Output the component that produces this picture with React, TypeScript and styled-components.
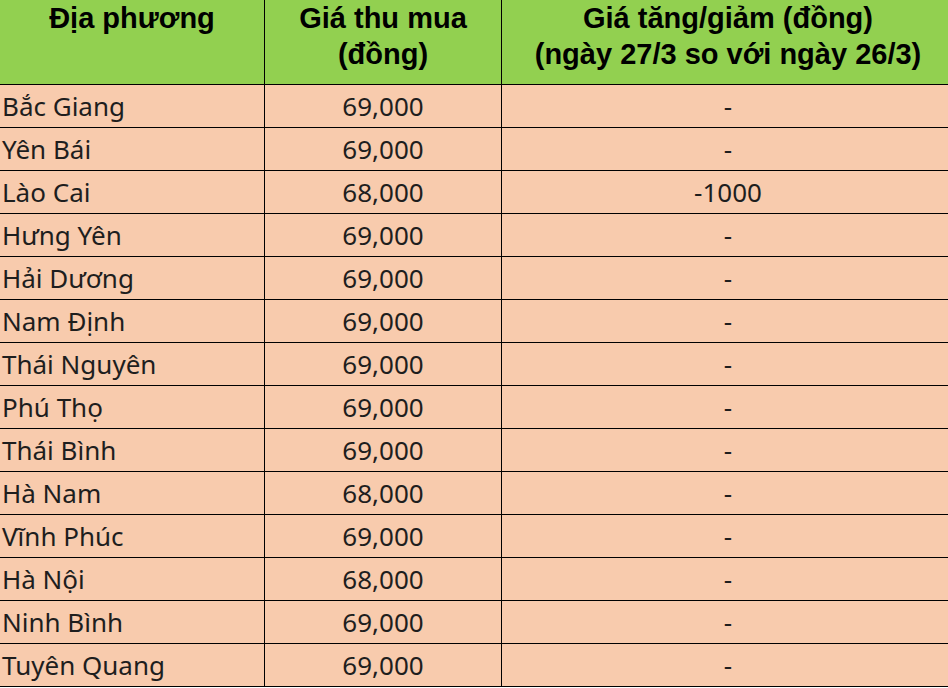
import React from 'react';
import styled, { createGlobalStyle } from 'styled-components';

const GlobalStyle = createGlobalStyle`
  html, body {
    margin: 0;
    padding: 0;
    background: #ffffff;
    overflow: hidden;
  }
`;

const Page = styled.div`
  width: 948px;
  height: 688px;
  overflow: hidden;
  background: #ffffff;
`;

const PriceTable = styled.table`
  border-collapse: collapse;
  table-layout: fixed;
  width: 952px;
  margin: -1px 0 0 -1px;
`;

const HeadCell = styled.th<{ width: number }>`
  width: ${p => p.width}px;
  height: 84px;
  padding: 0;
  background: #92d050;
  border: 1px solid #000;
  vertical-align: top;
  text-align: center;
  font-family: 'Liberation Sans', Arial, sans-serif;
  font-weight: 700;
  font-size: 29px;
  line-height: 36px;
  color: #000;
  white-space: nowrap;
`;

const Row = styled.tr`
  height: 43px;
`;

const Cell = styled.td<{ align?: 'left' | 'center' }>`
  padding: 0 ${p => (p.align === 'center' ? '0' : '2px')};
  background: #f8cbad;
  border: 1px solid #000;
  text-align: ${p => p.align || 'left'};
  vertical-align: middle;
  font-family: 'Noto Sans', 'Open Sans', sans-serif;
  font-size: 26px;
  color: #1e1e1e;
  white-space: nowrap;
`;

const rows: [string, string, string][] = [
  ['Bắc Giang', '69,000', '-'],
  ['Yên Bái', '69,000', '-'],
  ['Lào Cai', '68,000', '-1000'],
  ['Hưng Yên', '69,000', '-'],
  ['Hải Dương', '69,000', '-'],
  ['Nam Định', '69,000', '-'],
  ['Thái Nguyên', '69,000', '-'],
  ['Phú Thọ', '69,000', '-'],
  ['Thái Bình', '69,000', '-'],
  ['Hà Nam', '68,000', '-'],
  ['Vĩnh Phúc', '69,000', '-'],
  ['Hà Nội', '68,000', '-'],
  ['Ninh Bình', '69,000', '-'],
  ['Tuyên Quang', '69,000', '-'],
];

export default function App() {
  return (
    <Page>
      <GlobalStyle />
      <PriceTable>
        <thead>
          <tr>
            <HeadCell width={264}>Địa phương</HeadCell>
            <HeadCell width={236}>
              Giá thu mua
              <br />
              (đồng)
            </HeadCell>
            <HeadCell width={452}>
              Giá tăng/giảm (đồng)
              <br />
              (ngày 27/3 so với ngày 26/3)
            </HeadCell>
          </tr>
        </thead>
        <tbody>
          {rows.map(([place, price, change]) => (
            <Row key={place}>
              <Cell>{place}</Cell>
              <Cell align="center">{price}</Cell>
              <Cell align="center">{change}</Cell>
            </Row>
          ))}
        </tbody>
      </PriceTable>
    </Page>
  );
}
